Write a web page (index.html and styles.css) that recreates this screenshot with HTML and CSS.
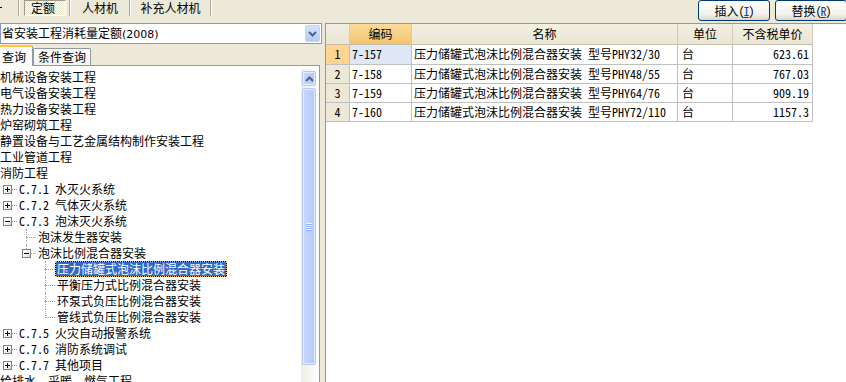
FILE: index.html
```html
<!DOCTYPE html>
<html lang="zh-CN">
<head>
<meta charset="utf-8">
<title>定额查询</title>
<link rel="stylesheet" href="styles.css">
</head>
<body>
<div class="app">
  <div class="left">
    <div class="toptabs">
      <span class="tt-frag"><i></i></span>
      <span class="tt-sep"></span>
      <span class="tt pressed">定额</span>
      <span class="tt-sep"></span>
      <span class="tt w58">人材机</span>
      <span class="tt-sep"></span>
      <span class="tt w79">补充人材机</span>
      <span class="tt-sep"></span>
    </div>
    <div class="combo">
      <span class="combo-text">省安装工程消耗量定额<span class="prop">(2008)</span></span>
      <span class="combo-btn"><svg width="9" height="6" viewBox="0 0 9 6"><path d="M1 1 L4.5 4.5 L8 1" fill="none" stroke="#4d6185" stroke-width="2"/></svg></span>
    </div>
    <div class="qtabs">
      <span class="qtab active">查询</span>
      <span class="qtab">条件查询</span>
    </div>
    <div class="tree">
      <div class="tree-list">
        <div class="row"><span class="lbl">机械设备安装工程</span></div>
        <div class="row"><span class="lbl">电气设备安装工程</span></div>
        <div class="row"><span class="lbl">热力设备安装工程</span></div>
        <div class="row"><span class="lbl">炉窑砌筑工程</span></div>
        <div class="row"><span class="lbl">静置设备与工艺金属结构制作安装工程</span></div>
        <div class="row"><span class="lbl">工业管道工程</span></div>
        <div class="row"><span class="lbl">消防工程</span></div>
        <div class="row"><span class="col"><i class="h"></i><i class="box plus"></i></span><span class="lbl">C.7.1 水灭火系统</span></div>
        <div class="row"><span class="col"><i class="h"></i><i class="box plus"></i></span><span class="lbl">C.7.2 气体灭火系统</span></div>
        <div class="row"><span class="col"><i class="h"></i><i class="box minus"></i></span><span class="lbl">C.7.3 泡沫灭火系统</span></div>
        <div class="row"><span class="col"></span><span class="col"><i class="v full"></i><i class="h"></i></span><span class="lbl">泡沫发生器安装</span></div>
        <div class="row"><span class="col"></span><span class="col"><i class="v top"></i><i class="h"></i><i class="box minus"></i></span><span class="lbl">泡沫比例混合器安装</span></div>
        <div class="row"><span class="col"></span><span class="col"></span><span class="col"><i class="v full"></i><i class="h"></i></span><span class="lbl sel">压力储罐式泡沫比例混合器安装</span></div>
        <div class="row"><span class="col"></span><span class="col"></span><span class="col"><i class="v full"></i><i class="h"></i></span><span class="lbl">平衡压力式比例混合器安装</span></div>
        <div class="row"><span class="col"></span><span class="col"></span><span class="col"><i class="v full"></i><i class="h"></i></span><span class="lbl">环泵式负压比例混合器安装</span></div>
        <div class="row"><span class="col"></span><span class="col"></span><span class="col"><i class="v half"></i><i class="h"></i></span><span class="lbl">管线式负压比例混合器安装</span></div>
        <div class="row"><span class="col"><i class="h"></i><i class="box plus"></i></span><span class="lbl">C.7.5 火灾自动报警系统</span></div>
        <div class="row"><span class="col"><i class="h"></i><i class="box plus"></i></span><span class="lbl">C.7.6 消防系统调试</span></div>
        <div class="row"><span class="col"><i class="h"></i><i class="box plus"></i></span><span class="lbl">C.7.7 其他项目</span></div>
        <div class="row"><span class="lbl">给排水、采暖、燃气工程</span></div>
      </div>
      <div class="vscroll">
        <div class="sb-btn"><svg width="9" height="6" viewBox="0 0 9 6"><path d="M1 5 L4.5 1.5 L8 5" fill="none" stroke="#4d6185" stroke-width="2"/></svg></div>
        <div class="sb-thumb"><span class="grip"></span></div>
        <div class="sb-track"></div>
      </div>
    </div>
  </div>
  <div class="splitter"></div>
  <div class="right">
    <div class="btnbar">
      <button class="xpbtn">插入<span class="acc">(<u>I</u>)</span></button>
      <button class="xpbtn">替换<span class="acc">(<u>R</u>)</span></button>
    </div>
    <div class="gridbox">
      <div class="grid">
        <div class="hc corner"></div>
        <div class="hc hot">编码</div>
        <div class="hc">名称</div>
        <div class="hc">单位</div>
        <div class="hc">不含税单价</div>

        <div class="c num cur">1</div>
        <div class="c code cur">7-157</div>
        <div class="c">压力储罐式泡沫比例混合器安装 型号PHY32/30</div>
        <div class="c unit">台</div>
        <div class="c price">623.61</div>

        <div class="c num">2</div>
        <div class="c code">7-158</div>
        <div class="c">压力储罐式泡沫比例混合器安装 型号PHY48/55</div>
        <div class="c unit">台</div>
        <div class="c price">767.03</div>

        <div class="c num">3</div>
        <div class="c code">7-159</div>
        <div class="c">压力储罐式泡沫比例混合器安装 型号PHY64/76</div>
        <div class="c unit">台</div>
        <div class="c price">909.19</div>

        <div class="c num">4</div>
        <div class="c code">7-160</div>
        <div class="c">压力储罐式泡沫比例混合器安装 型号PHY72/110</div>
        <div class="c unit">台</div>
        <div class="c price">1157.3</div>
      </div>
    </div>
  </div>
</div>
</body>
</html>
```

FILE: styles.css
```css
* { box-sizing: border-box; }
html, body { margin: 0; padding: 0; }
body {
  width: 846px;
  height: 382px;
  overflow: hidden;
  background: #ece9d8;
  color: #000;
  font: 12px/16px "Noto Sans Mono CJK SC", "Noto Sans CJK SC", sans-serif;
}
.app { display: flex; height: 382px; }

/* ---------- left column ---------- */
.left { width: 322px; flex: none; display: flex; flex-direction: column; }

.toptabs { display: flex; height: 17px; align-items: stretch; }
.tt-frag { width: 18px; position: relative; }
.tt-frag i { display: block; width: 2px; height: 1px; background: #000; margin-top: 7px; }
.tt-sep { width: 2px; border-left: 1px solid #aca899; border-right: 1px solid #fff; height: 16px; }
.tt { display: flex; align-items: center; justify-content: center; height: 16px; line-height: 16px; }
.tt.pressed {
  width: 42px; margin: 0 3px 0 4px;
  border: 1px solid; border-color: #9d9a8b #fff #fff #9d9a8b;
  background: repeating-conic-gradient(#fff 0 25%, #e4e1cf 0 50%) 0 0/2px 2px;
  padding-right: 4px;
}
.tt.w58 { width: 58px; }
.tt.w79 { width: 79px; }

.combo {
  margin-top: 6px; height: 21px;
  border: 1px solid #7f9db9; background: #fff;
  display: flex; align-items: center; justify-content: space-between;
  padding: 1px;
}
.combo-text { padding-left: 0; line-height: 17px; white-space: nowrap; }
.prop { font-family: "DejaVu Sans", sans-serif; font-size: 11px; }
.combo-btn {
  width: 15px; height: 17px; border-radius: 2px;
  background: linear-gradient(#d5e2fd, #b6cbf6);
  border: 1px solid #c3d3f7;
  display: flex; align-items: center; justify-content: center;
}

.qtabs { height: 21px; display: flex; align-items: flex-end; }
.qtab {
  height: 17px; line-height: 15px; padding: 0 4px;
  border: 1px solid #919b9c; border-bottom: none;
  background: linear-gradient(#fff, #f3f2ec);
  border-radius: 2px 2px 0 0;
}
.qtab.active {
  height: 21px; line-height: 19px; width: 34px; margin-left: -1px;
  padding: 0 0 0 2px;
  border-top: 2px solid #ffc83c;
  background: #fcfcfe; position: relative; z-index: 1;
  margin-bottom: -1px;
}

.tree {
  flex: 1; min-height: 0; margin-right: 2px;
  background: #fff; border: 1px solid #7f9db9; border-left: none; border-bottom: none;
  display: flex; padding: 3px 2px 0 0;
}
.tree-list { flex: 1; overflow: hidden; white-space: nowrap; }
.row { height: 16px; display: flex; align-items: stretch; }
.col { width: 19px; flex: none; position: relative; }
.col .h { position: absolute; left: 7px; top: 8px; width: 10px; border-top: 1px dotted #a0a0a0; }
.col .v { position: absolute; left: 7px; border-left: 1px dotted #a0a0a0; }
.col .v.full { top: 0; bottom: 0; }
.col .v.half { top: 0; height: 9px; }
.col .v.top { top: 0; height: 4px; }
.col .box {
  position: absolute; left: 3px; top: 4px; width: 9px; height: 9px;
  border: 1px solid #848284; background: linear-gradient(135deg, #fff 40%, #d6d3ce);
}
.col .box::before {
  content: ""; position: absolute; left: 1px; top: 3px; width: 5px; height: 1px; background: #000;
}
.col .box.plus::after {
  content: ""; position: absolute; left: 3px; top: 1px; width: 1px; height: 5px; background: #000;
}
.lbl {
  display: block; height: 16px; line-height: 14px;
  margin-left: -2px; padding: 0 1px; border: 1px solid transparent;
}
.lbl.sel {
  color: #fff;
  border: 1px dotted #f2c070;
  background: linear-gradient(#316ac5, #316ac5) padding-box, linear-gradient(#000, #000) border-box;
}

.vscroll { width: 16px; flex: none; display: flex; flex-direction: column; padding-top: 2px; background: linear-gradient(90deg, #eeede5, #fdfdfb); }
.sb-btn, .sb-thumb {
  margin: 0 1px; border: 1px solid #b5c8f3; border-radius: 2px;
  background: linear-gradient(90deg, #c7d7fc, #bccff9 60%, #b4c8f6);
  box-shadow: inset 0 0 0 1px #e3ebfd;
}
.sb-btn { height: 15px; display: flex; align-items: center; justify-content: center; }
.sb-thumb { height: 277px; margin-top: 2px; display: flex; align-items: center; justify-content: center; }
.grip { width: 6px; height: 8px; background: repeating-linear-gradient(#eef4fe 0 1px, #8cb0f8 1px 2px); }
.sb-track { flex: 1; }

.splitter { width: 3px; flex: none; }

/* ---------- right column ---------- */
.right { flex: 1; display: flex; flex-direction: column; min-width: 0; }
.btnbar { height: 23px; display: flex; justify-content: flex-end; gap: 5px; margin-right: -1px; }
.xpbtn {
  width: 72px; height: 21px; padding: 0; margin: 0;
  font: 12px/16px "Noto Sans Mono CJK SC", "Noto Sans CJK SC", sans-serif; color: #000;
  border: 1px solid #003c74; border-radius: 3px;
  background: linear-gradient(#fff, #f2f1ea 70%, #dcd8c8);
}
.acc { letter-spacing: -1px; }
.acc u { color: #1a3fa8; }

.gridbox { flex: 1; background: #fff; border-left: 1px solid #7f9db9; border-top: 1px solid #7f9db9; }
.grid {
  display: grid;
  grid-template-columns: 24px 62px 266px 55px 80px;
  grid-template-rows: 21px 20px 19px 19px 19px;
  width: max-content;
}
.hc, .c { border-right: 1px solid #c0c0c0; border-bottom: 1px solid #c0c0c0; white-space: nowrap; overflow: hidden; }
.hc {
  display: flex; align-items: center; justify-content: center;
  background: linear-gradient(#f2f0e4, #e9e6d4);
  border-right-color: #cfccbb; border-bottom-color: #c3bfa8;
}
.hc.hot { background: linear-gradient(#fbdc9e, #f4c46c); }
.c { line-height: 18px; padding: 0 2px; }
.c.num { text-align: center; background: #ece9d8; border-right-color: #c3bfa8; }
.c.num.cur { background: #ffd48f; }
.c.code.cur { background: #dde7f5; }
.c.unit { padding-left: 4px; }
.c.price { text-align: right; padding-right: 3px; }
```
